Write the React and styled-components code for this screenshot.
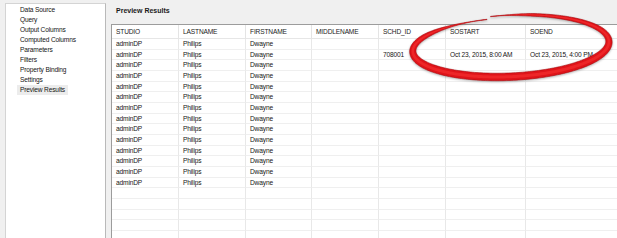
import React from "react";
import styled, { createGlobalStyle } from "styled-components";

const GlobalStyle = createGlobalStyle`
  html, body, #root { margin: 0; padding: 0; height: 100%; }
  body {
    background: #f0f0f0;
    font-family: "Liberation Sans", Arial, sans-serif;
    color: #1e1e1e;
    overflow: hidden;
  }
  * { box-sizing: border-box; }
`;

const Page = styled.div`
  position: relative;
  display: flex;
  height: 238px;
  width: 617px;
  overflow: hidden;
`;

const Nav = styled.ul`
  list-style: none;
  margin: 3px 0 0 5px;
  padding: 1px 0 0 0;
  width: 101px;
  flex: none;
  background: #ffffff;
  border: 1px solid #d4d4d4;
  border-right-color: #b9b9b9;
  border-bottom: none;
`;

const NavItem = styled.li`
  height: 10px;
  line-height: 10px;
  font-size: 6.6px;
  letter-spacing: -0.15px;
  padding-left: 11px;
  white-space: nowrap;
  color: #151515;
  span {
    display: inline-block;
    padding: 0 3px;
    background: ${(p) => (p.$selected ? "#ececec" : "transparent")};
  }
`;

const Main = styled.div`
  flex: 1;
  display: flex;
  flex-direction: column;
  padding-left: 5px;
  min-width: 0;
`;

const Title = styled.div`
  height: 24px;
  padding: 0 0 4px 5px;
  display: flex;
  align-items: center;
  font-size: 7px;
  font-weight: bold;
  color: #1a1a1a;
  flex: none;
`;

const Frame = styled.div`
  flex: 1;
  background: #ffffff;
  border: 1px solid #9c9c9c;
  border-right: none;
  border-bottom: none;
  overflow: hidden;
`;

const Grid = styled.div`
  display: grid;
  grid-template-columns: 67px 67px 66px 67px 67px 80px 200px;
`;

const HeadCell = styled.div`
  height: 14px;
  line-height: 13px;
  padding: 0 4px;
  font-size: 6.6px;
  letter-spacing: -0.15px;
  color: #222222;
  border-right: 1px solid #e4e4e4;
  border-bottom: 1px solid #e6e6e6;
  white-space: nowrap;
  overflow: hidden;
`;

const Cell = styled.div`
  height: 10.667px;
  line-height: 10px;
  padding: 0 4px;
  font-size: 6.6px;
  letter-spacing: -0.15px;
  color: #151515;
  border-right: 1px solid #e8e8e8;
  border-bottom: 1px solid #efefef;
  white-space: nowrap;
  overflow: hidden;
`;

const Overlay = styled.svg`
  position: absolute;
  left: 0;
  top: 0;
  pointer-events: none;
  filter: drop-shadow(0.6px 1.4px 1px rgba(0, 0, 0, 0.3));
`;

const navItems = [
  "Data Source",
  "Query",
  "Output Columns",
  "Computed Columns",
  "Parameters",
  "Filters",
  "Property Binding",
  "Settings",
  "Preview Results",
];

const columns = ["STUDIO", "LASTNAME", "FIRSTNAME", "MIDDLENAME", "SCHD_ID", "SOSTART", "SOEND"];

const rows = Array.from({ length: 20 }, (_, i) => {
  if (i >= 14) return ["", "", "", "", "", "", ""];
  if (i === 1)
    return [
      "adminDP",
      "Philips",
      "Dwayne",
      "",
      "708001",
      "Oct 23, 2015, 8:00 AM",
      "Oct 23, 2015, 4:00 PM",
    ];
  return ["adminDP", "Philips", "Dwayne", "", "", "", ""];
});

function smooth(v) {
  const x = Math.max(0, Math.min(1, v));
  return x * x * (3 - 2 * x);
}

function buildRing(scale) {
  const cx = 510.5;
  const cy = 46.5;
  const rot = (-3 * Math.PI) / 180;
  const th0 = 4.485;
  const th1 = -1.758;
  const N = 260;
  const outer = [];
  const inner = [];
  const tr = (x, y) => [
    cx + x * Math.cos(rot) - y * Math.sin(rot),
    cy + x * Math.sin(rot) + y * Math.cos(rot),
  ];
  for (let i = 0; i <= N; i++) {
    const s = i / N;
    const th = th0 + (th1 - th0) * s;
    const rx = 97.5 + 1.5 * s;
    const ry = 29 + 2.5 * s;
    const x = rx * Math.cos(th);
    const y = ry * Math.sin(th);
    let nx = Math.cos(th) / rx;
    let ny = Math.sin(th) / ry;
    const len = Math.hypot(nx, ny);
    nx /= len;
    ny /= len;
    const sn = Math.sin(th);
    const base = 2.6 + 4.9 * (1 - ((1 - sn) / 2) ** 2);
    const taper = smooth(s / 0.14) * smooth((1 - s) / 0.08);
    const t = Math.max(0.3, base * taper) * scale;
    outer.push(tr(x + (nx * t) / 2, y + (ny * t) / 2));
    inner.push(tr(x - (nx * t) / 2, y - (ny * t) / 2));
  }
  const pts = [...outer, ...inner.reverse()];
  return (
    "M" +
    pts.map((p) => p[0].toFixed(2) + " " + p[1].toFixed(2)).join(" L") +
    " Z"
  );
}

const ringPath = buildRing(1);
const ringCore = buildRing(0.4);

export default function App() {
  return (
    <>
      <GlobalStyle />
      <Page>
        <Nav>
          {navItems.map((n) => (
            <NavItem key={n} $selected={n === "Preview Results"}>
              <span>{n}</span>
            </NavItem>
          ))}
        </Nav>
        <Main>
          <Title>Preview Results</Title>
          <Frame>
            <Grid>
              {columns.map((c) => (
                <HeadCell key={c}>{c}</HeadCell>
              ))}
              {rows.map((r, ri) =>
                r.map((v, ci) => <Cell key={ri + "-" + ci}>{v}</Cell>)
              )}
            </Grid>
          </Frame>
        </Main>
        <Overlay width="617" height="238" viewBox="0 0 617 238">
          <path d={ringPath} fill="#df141a" stroke="#a9070c" strokeWidth="0.6" strokeLinejoin="round" />
          <path d={ringCore} fill="#f02a2c" opacity="0.8" />
        </Overlay>
      </Page>
    </>
  );
}
